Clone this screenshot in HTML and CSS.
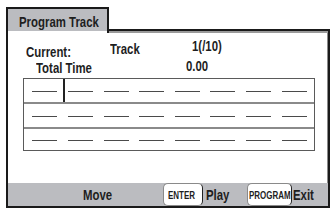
FILE: index.html
```html
<!DOCTYPE html>
<html lang="en">
<head>
  <meta charset="UTF-8">
  <meta name="viewport" content="width=device-width, initial-scale=1.0">
  <title>Program Track</title>
  <link rel="stylesheet" href="styles.css">
</head>
<body>
  <div class="screen">
    <div class="head">
      <div class="tab"><span class="narrow">Program Track</span></div>
      <div class="head-line"></div>
    </div>

    <div class="panel">
      <div class="info">
        <div class="info-row first">
          <span class="lbl-current"><span class="narrow">Current:</span></span>
          <span class="lbl-track"><span class="narrow">Track</span></span>
          <span class="val-track"><span class="narrow">1(/10)</span></span>
        </div>
        <div class="info-row second">
          <span class="lbl-total"><span class="narrow">Total Time</span></span>
          <span class="val-time"><span class="narrow">0.00</span></span>
        </div>
      </div>

      <div class="tracks">
        <div class="track-row">
          <span class="cursor"></span>
          <span class="dash"></span><span class="dash"></span><span class="dash"></span><span class="dash"></span>
          <span class="dash"></span><span class="dash"></span><span class="dash"></span><span class="dash"></span>
        </div>
        <div class="track-row">
          <span class="dash"></span><span class="dash"></span><span class="dash"></span><span class="dash"></span>
          <span class="dash"></span><span class="dash"></span><span class="dash"></span><span class="dash"></span>
        </div>
        <div class="track-row last">
          <span class="dash"></span><span class="dash"></span><span class="dash"></span><span class="dash"></span>
          <span class="dash"></span><span class="dash"></span><span class="dash"></span><span class="dash"></span>
        </div>
      </div>

      <div class="bar">
        <span class="bar-move"><span class="narrow">Move</span></span>
        <span class="key key-enter"><span class="narrow">ENTER</span></span>
        <span class="bar-play"><span class="narrow">Play</span></span>
        <span class="key key-program"><span class="narrow">PROGRAM</span></span>
        <span class="bar-exit"><span class="narrow">Exit</span></span>
      </div>
    </div>
  </div>
</body>
</html>
```

FILE: styles.css
```css
body{
  margin: 0;
  background-color: white;
  color: #1e1e1e;
  font-family: "Liberation Sans", Arial, sans-serif;
  font-weight: bold;
  font-size: 15px;
  line-height: 14px;
}
/* the screen font is a condensed one, so squeeze Arial-width text */
.narrow{
  display: inline-block;
  white-space: nowrap;
  transform: scaleX(0.76);
  transform-origin: left center;
}
.screen{
  margin: 7px 0 0 6px;
  width: 324px;
}
.head{
  display: flex;
  height: 26px;
}
.tab{
  box-sizing: border-box;
  width: 103px;
  height: 26px;
  border: 2px solid #1a1a1a;
  border-bottom: none;
  background: linear-gradient(#bbbcc0 22px, white 22px);
  padding: 6px 0 0 11px;
}
.head-line{
  flex: 1;
  align-self: flex-end;
  height: 2px;
  border-top: 2px solid #1a1a1a;
  border-right: 2px solid #1a1a1a;
  background-color: #9a9a9a;
}
.panel{
  box-sizing: border-box;
  height: 175px;
  border-left: 2px solid #1a1a1a;
  border-right: 2px solid #1a1a1a;
  border-bottom: 2px solid #1a1a1a;
  box-shadow: inset -1px 0 0 #8a8a8a;
  display: flex;
  flex-direction: column;
}
.info{
  padding-top: 6px;
}
.info-row{
  display: flex;
  align-items: flex-start;
}
.lbl-current{
  width: 84px;
  margin: 6px 0 0 18px;
}
.lbl-track{
  width: 82px;
  margin-top: 3px;
}
.second{
  padding-left: 28px;
}
.lbl-total{
  width: 150px;
  margin-top: 2px;
}
.tracks{
  box-sizing: border-box;
  width: 292px;
  margin: 3px 0 0 15px;
  border: 1px solid #5a5a5a;
}
.track-row{
  position: relative;
  height: 23px;
  padding: 2px 0 0 1px;
  box-sizing: border-box;
  display: flex;
  justify-content: center;
  align-items: center;
  gap: 10.6px;
}
.track-row + .track-row{
  height: 25px;
  border-top: 2px solid #8a8a8a;
}
.track-row.last{
  height: 23px;
}
.dash{
  width: 25px;
  height: 1.5px;
  background-color: #4a4a4a;
}
.cursor{
  position: absolute;
  left: 39px;
  top: 0;
  bottom: 0;
  width: 1.5px;
  background-color: #222;
}
.bar{
  margin-top: auto;
  height: 23px;
  background-color: #bbbcc0;
  display: flex;
  align-items: center;
}
.bar-move{
  width: 80px;
  margin-left: 75px;
}
.key{
  box-sizing: border-box;
  height: 23px;
  padding-left: 4px;
  background-color: white;
  border: 1px solid #8a8a8a;
  border-right: 1.5px solid #222;
  border-radius: 5px;
  font-size: 10.5px;
  display: flex;
  align-items: center;
}
.key-enter{
  width: 40px;
}
.bar-play{
  width: 41px;
  margin-left: 3px;
}
.key-program{
  width: 45px;
  padding-left: 1px;
}
.bar-exit{
  margin-left: 1px;
}
```
